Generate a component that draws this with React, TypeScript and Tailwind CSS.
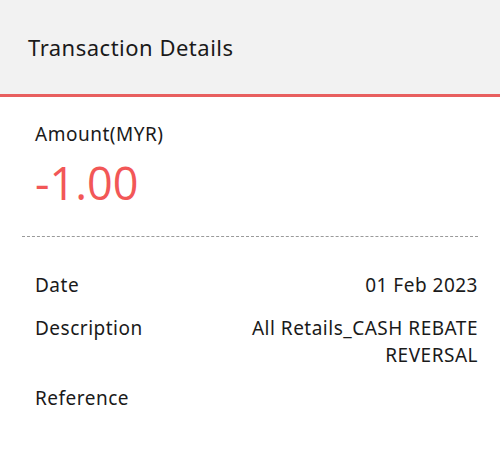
import React from 'react';

const rows = [
  { label: 'Date', value: '01 Feb 2023' },
  { label: 'Description', value: 'All Retails_CASH REBATE\nREVERSAL' },
  { label: 'Reference', value: '' },
];

export default function App() {
  return (
    <div className="w-[500px] h-[456px] bg-white text-[#1a1a1a] font-['Noto_Sans','Lato',sans-serif] tracking-[0.5px]">
      {/* Header */}
      <div className="h-[97px] bg-[#f2f2f2] border-b-[3px] border-[#e85f5f] flex items-center px-[28px]">
        <h1 className="text-[22px] leading-none">Transaction Details</h1>
      </div>

      {/* Amount */}
      <div className="px-[35px] pt-[26px]">
        <div className="text-[19px] leading-[22px]">Amount(MYR)</div>
        <div className="mt-[13px] text-[45px] leading-[50px] tracking-normal text-[#f25757] font-['Open_Sans',sans-serif]">-1.00</div>
      </div>

      <div className="mx-[22px] mt-[28px] border-t border-dashed border-[#9a9a9a]" />

      {/* Details */}
      <div className="pl-[35px] pr-[22px] pt-[35px] flex flex-col gap-[16px]">
        {rows.map((row) => (
          <div key={row.label} className="flex justify-between text-[19px] leading-[27px]">
            <span>{row.label}</span>
            <span className="text-right whitespace-pre-line">{row.value}</span>
          </div>
        ))}
      </div>
    </div>
  );
}
